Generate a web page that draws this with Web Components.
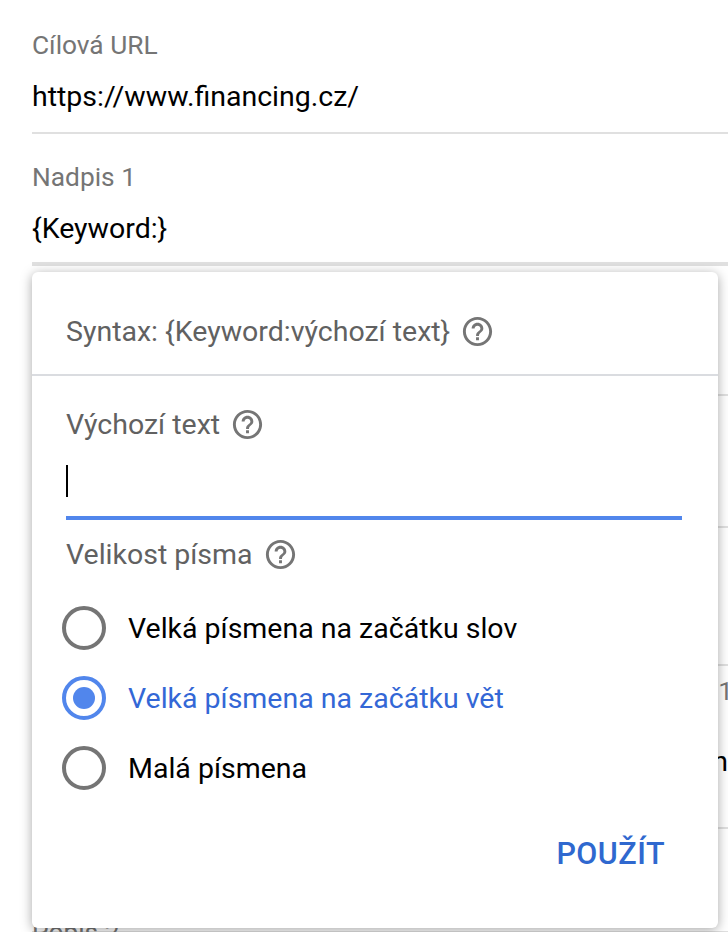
<!DOCTYPE html>
<html lang="cs">
<head>
<meta charset="utf-8">
<title>Nadpis</title>
<style>
  html, body { margin: 0; height: 932px; overflow: hidden; background: #fff; }
  body { font-family: Roboto, "Liberation Sans", sans-serif; position: relative; }
</style>
</head>
<body>
<template id="field-tpl">
  <style>
    :host { display: block; box-sizing: border-box; padding-left: 32px; height: var(--h, 132px); }
    .box { box-sizing: border-box; height: 100%; border-bottom: var(--line, 2px) solid #e0e0e0; display: flex; flex-direction: column; }
    .label { color: #757575; font-size: 26.3px; line-height: 30px; margin-top: var(--top, 30px); }
    .value { color: #000; font-size: 28.5px; line-height: 32px; margin-top: 21px; }
  </style>
  <div class="box">
    <div class="label"><slot name="label"></slot></div>
    <div class="value"><slot></slot></div>
  </div>
</template>

<template id="help-tpl">
  <style>
    :host { display: inline-flex; width: 35px; height: 35px; flex: none; }
    svg { width: 100%; height: 100%; fill: #757575; }
  </style>
  <svg viewBox="0 0 24 24"><path d="M11 18h2v-2h-2v2zm1-16C6.48 2 2 6.48 2 12s4.48 10 10 10 10-4.48 10-10S17.52 2 12 2zm0 18c-4.41 0-8-3.59-8-8s3.59-8 8-8 8 3.59 8 8-3.59 8-8 8zm0-14c-2.21 0-4 1.79-4 4h2c0-1.1.9-2 2-2s2 .9 2 2c0 2-3 1.75-3 5h2c0-2.25 3-2.5 3-5 0-2.21-1.79-4-4-4z"/></svg>
</template>

<template id="radio-tpl">
  <style>
    :host { display: flex; align-items: center; height: 70px; gap: 22px; color: #000; font-size: 28.5px; }
    :host([checked]) { color: #3367d6; }
    .ring { box-sizing: border-box; width: 44px; height: 44px; border-radius: 50%; border: 4.5px solid #757575; display: flex; align-items: center; justify-content: center; flex: none; }
    :host([checked]) .ring { border-color: #5186ec; }
    :host([checked]) .ring::after { content: ""; width: 22px; height: 22px; border-radius: 50%; background: #5186ec; }
  </style>
  <span class="ring"></span><span><slot></slot></span>
</template>

<template id="popover-tpl">
  <style>
    :host { display: block; position: absolute; left: 32px; top: 272px; width: 686px; height: 656px; box-sizing: border-box; background: #fff; border-radius: 6px; box-shadow: 0 2px 12px rgba(0,0,0,.35); color: #616161; font-size: 28.5px; }
    .head { box-sizing: border-box; height: 104px; padding: 42px 34px 0; border-bottom: 2px solid #dadce0; display: flex; align-items: flex-start; gap: 10px; line-height: 35px; }
    .body { padding: 0 36px 0 34px; }
    .row { display: flex; align-items: center; gap: 10px; height: 35px; }
    .r1 { margin-top: 31px; }
    .input { box-sizing: border-box; height: 69px; margin-top: 9px; border-bottom: 4px solid #5186ec; padding-top: 14px; }
    .caret { display: block; width: 2px; height: 32px; background: #000; }
    .r2 { margin-top: 17px; }
    .radios { margin-top: 21px; margin-left: -4px; }
    .foot { display: flex; justify-content: flex-end; margin-top: 33px; padding-right: 17px; }
    .apply { color: #2f68cf; font-size: 30.5px; font-weight: 500; line-height: 36px; letter-spacing: .5px; }
  </style>
  <div class="head"><span>Syntax: {Keyword:výchozí text}</span><x-help></x-help></div>
  <div class="body">
    <div class="row r1"><span>Výchozí text</span><x-help></x-help></div>
    <div class="input"><span class="caret"></span></div>
    <div class="row r2"><span>Velikost písma</span><x-help></x-help></div>
    <div class="radios">
      <x-radio>Velká písmena na začátku slov</x-radio>
      <x-radio checked>Velká písmena na začátku vět</x-radio>
      <x-radio>Malá písmena</x-radio>
    </div>
    <div class="foot"><span class="apply">POUŽÍT</span></div>
  </div>
</template>

<x-field style="--h:134px"><span slot="label">Cílová URL</span>https://www.financing.cz/</x-field>
<x-field style="--h:132px;--line:4px;--top:28px"><span slot="label">Nadpis 1</span>{Keyword:}</x-field>
<x-field style="--h:130px"><span slot="label">Nadpis 2</span>&nbsp;</x-field>
<x-field style="--h:132px"><span slot="label">Nadpis 3</span>&nbsp;</x-field>
<x-field style="--h:138px"><span slot="label">Zobrazovaná cesta</span>&nbsp;</x-field>
<x-field style="--h:163px;--top:10px"><span slot="label"><span style="display:block;text-align:right;margin-right:-5px">1</span></span><span style="display:block;text-align:right;margin-top:19px">n</span></x-field>
<x-field style="--h:104px;--top:88px"><span slot="label">Popis 2</span></x-field>

<x-popover></x-popover>

<script>
  function makeEl(name, tpl) {
    customElements.define(name, class extends HTMLElement {
      constructor() {
        super();
        this.attachShadow({ mode: "open" }).appendChild(document.getElementById(tpl).content.cloneNode(true));
      }
    });
  }
  makeEl("x-field", "field-tpl");
  makeEl("x-help", "help-tpl");
  makeEl("x-radio", "radio-tpl");
  makeEl("x-popover", "popover-tpl");
</script>
</body>
</html>
